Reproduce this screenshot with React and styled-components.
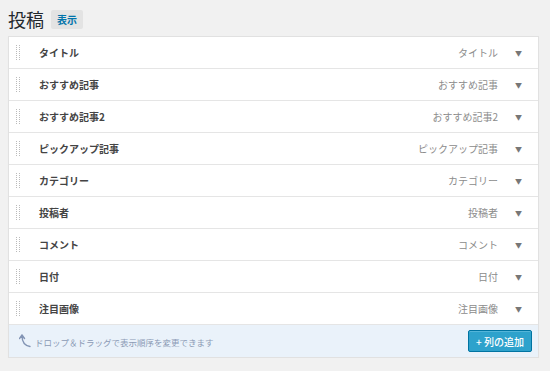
import React from 'react';
import styled, { createGlobalStyle } from 'styled-components';

const GlobalStyle = createGlobalStyle`
    body {
        margin: 0;
        background: #f1f1f1;
        font-family: "Noto Sans CJK JP", "Noto Sans", sans-serif;
        color: #23282d;
    }
`;

const columns = [
    'タイトル',
    'おすすめ記事',
    'おすすめ記事2',
    'ピックアップ記事',
    'カテゴリー',
    '投稿者',
    'コメント',
    '日付',
    '注目画像',
];

function Handle() {
    return (
        <HandleIcon width="6" height="16" viewBox="0 0 6 16">
            {[0, 1, 2, 3, 4, 5, 6, 7].map((r) => (
                <g key={r}>
                    <rect x="0" y={r * 2} width="1" height="1" fill="#bbb" />
                    <rect x="3" y={r * 2} width="1" height="1" fill="#bbb" />
                </g>
            ))}
        </HandleIcon>
    );
}

export default function App() {
    return (
        <Page>
            <GlobalStyle />
            <Header>
                <Title>投稿</Title>
                <ViewButton>表示</ViewButton>
            </Header>
            <Panel>
                {columns.map((c) => (
                    <Row key={c}>
                        <Handle />
                        <Label>{c}</Label>
                        <Value>{c}</Value>
                        <Caret>▼</Caret>
                    </Row>
                ))}
                <Footer>
                    <Hint>
                        <svg width="12" height="14" viewBox="0 0 12 14">
                            <path d="M3 1 L0.5 4.5 M3 1 L5.5 4.5 M3 1.5 C3 8 5 11.5 11 12.5" stroke="#8294b4" strokeWidth="1.4" fill="none" strokeLinecap="round" />
                        </svg>
                        ドロップ＆ドラッグで表示順序を変更できます
                    </Hint>
                    <AddButton>+ 列の追加</AddButton>
                </Footer>
            </Panel>
        </Page>
    );
}

const Page = styled.div`
    padding: 7px 11px 0 8px;
    width: 531px;
`;
const Header = styled.div`
    display: flex;
    align-items: center;
    gap: 7px;
    height: 24px;
    margin-bottom: 5px;
`;
const Title = styled.h1`
    margin: 0;
    font-size: 18px;
    font-weight: 400;
    line-height: 24px;
    color: #23282d;
`;
const ViewButton = styled.div`
    width: 32px;
    height: 19px;
    margin-top: 1px;
    background: #e3e3e3;
    border-radius: 2px;
    color: #0073aa;
    font-size: 10px;
    font-weight: 700;
    display: flex;
    align-items: center;
    justify-content: center;
`;
const Panel = styled.div`
    background: #fff;
    border: 1px solid #e1e1e1;
    box-shadow: 0 1px 1px rgba(0, 0, 0, 0.04);
`;
const Row = styled.div`
    display: flex;
    align-items: center;
    height: 31px;
    border-bottom: 1px solid #e5e5e5;
    padding: 0 16px 0 7px;
    font-size: 10px;
`;
const HandleIcon = styled.svg`
    flex: none;
    margin-right: 17px;
`;
const Label = styled.div`
    flex: 1;
    font-weight: 700;
    color: #444;
`;
const Value = styled.div`
    color: #8c8c8c;
`;
const Caret = styled.div`
    margin-left: 17px;
    font-size: 7px;
    color: #777;
`;
const Footer = styled.div`
    display: flex;
    align-items: center;
    justify-content: space-between;
    height: 32px;
    padding: 0 6px 0 10px;
    background: #eaf2fa;
`;
const Hint = styled.div`
    display: flex;
    align-items: flex-end;
    gap: 4px;
    font-size: 8.5px;
    color: #8a9ab5;
`;
const AddButton = styled.div`
    height: 20px;
    padding: 0 7px;
    background: #2ea2cc;
    border: 1px solid #0074a2;
    border-radius: 2px;
    box-shadow: inset 0 1px 0 rgba(120, 200, 230, 0.5);
    color: #fff;
    font-size: 10px;
    font-weight: 500;
    display: flex;
    align-items: center;
`;
